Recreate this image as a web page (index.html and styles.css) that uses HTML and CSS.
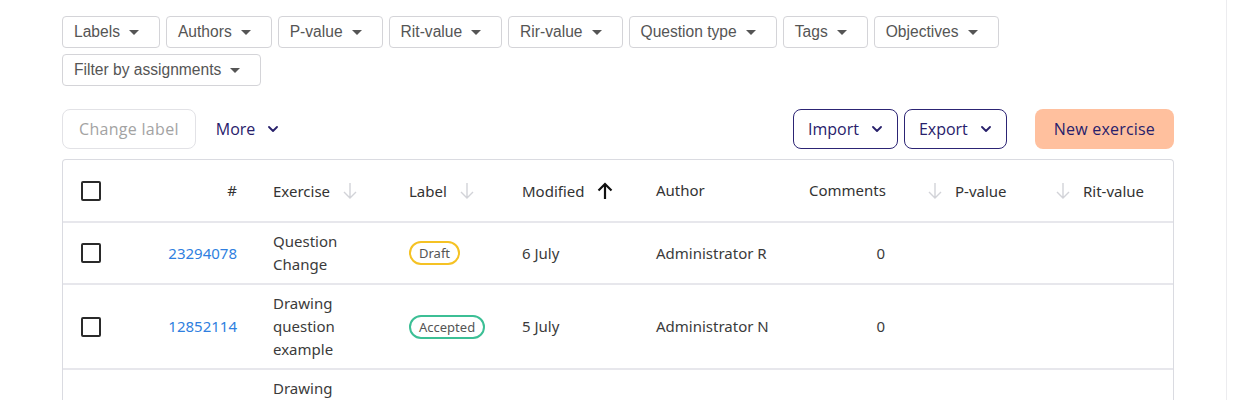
FILE: index.html
```html
<!DOCTYPE html>
<html lang="en">
<head>
    <meta charset="utf-8">
    <title>Exercises</title>
    <link rel="stylesheet" href="styles.css">
</head>
<body>
    <div class="page">
        <!-- filters -->
        <div class="filters">
            <button class="filter">Labels <span class="caret"></span></button>
            <button class="filter">Authors <span class="caret"></span></button>
            <button class="filter">P-value <span class="caret"></span></button>
            <button class="filter">Rit-value <span class="caret"></span></button>
            <button class="filter">Rir-value <span class="caret"></span></button>
            <button class="filter">Question type <span class="caret"></span></button>
            <button class="filter">Tags <span class="caret"></span></button>
            <button class="filter">Objectives <span class="caret"></span></button>
            <button class="filter">Filter by assignments <span class="caret"></span></button>
        </div>

        <!-- toolbar -->
        <div class="actions">
            <button class="btn btn-disabled">Change label</button>
            <button class="btn btn-link">More
                <svg class="chev" viewBox="0 0 10 6"><path d="M1 1l4 4 4-4"/></svg>
            </button>
            <div class="spacer"></div>
            <button class="btn btn-outline">Import
                <svg class="chev" viewBox="0 0 10 6"><path d="M1 1l4 4 4-4"/></svg>
            </button>
            <button class="btn btn-outline">Export
                <svg class="chev" viewBox="0 0 10 6"><path d="M1 1l4 4 4-4"/></svg>
            </button>
            <button class="btn btn-primary">New exercise</button>
        </div>

        <!-- exercises table -->
        <div class="table-wrap">
            <table class="exercises">
                <colgroup>
                    <col style="width:68px">
                    <col style="width:124px">
                    <col style="width:136px">
                    <col style="width:113px">
                    <col style="width:134px">
                    <col style="width:153px">
                    <col style="width:112px">
                    <col style="width:134px">
                    <col>
                </colgroup>
                <thead>
                    <tr>
                        <th><span class="check"></span></th>
                        <th class="num">#</th>
                        <th><span class="sortable">Exercise<svg class="sort" viewBox="0 0 16 18"><path d="M8 1v15M2 10l6 6 6-6"/></svg></span></th>
                        <th><span class="sortable">Label<svg class="sort" viewBox="0 0 16 18"><path d="M8 1v15M2 10l6 6 6-6"/></svg></span></th>
                        <th><span class="sortable">Modified<svg class="sort active" viewBox="0 0 16 18"><path d="M8 17V2M1.5 8.5L8 2l6.5 6.5"/></svg></span></th>
                        <th>Author</th>
                        <th class="num">Comments</th>
                        <th class="pval"><span class="sortable"><svg class="sort" viewBox="0 0 16 18"><path d="M8 1v15M2 10l6 6 6-6"/></svg>P-value</span></th>
                        <th><span class="sortable"><svg class="sort" viewBox="0 0 16 18"><path d="M8 1v15M2 10l6 6 6-6"/></svg>Rit-value</span></th>
                    </tr>
                </thead>
                <tbody>
                    <tr>
                        <td><span class="check"></span></td>
                        <td class="num"><a href="#">23294078</a></td>
                        <td>Question Change</td>
                        <td><span class="badge draft">Draft</span></td>
                        <td>6 July</td>
                        <td>Administrator R</td>
                        <td class="num">0</td>
                        <td></td>
                        <td></td>
                    </tr>
                    <tr>
                        <td><span class="check"></span></td>
                        <td class="num"><a href="#">12852114</a></td>
                        <td>Drawing question example</td>
                        <td><span class="badge accepted">Accepted</span></td>
                        <td>5 July</td>
                        <td>Administrator N</td>
                        <td class="num">0</td>
                        <td></td>
                        <td></td>
                    </tr>
                    <tr>
                        <td><span class="check"></span></td>
                        <td class="num"><a href="#">11907356</a></td>
                        <td>Drawing question with a longer example</td>
                        <td><span class="badge draft">Draft</span></td>
                        <td>4 July</td>
                        <td>Administrator N</td>
                        <td class="num">0</td>
                        <td></td>
                        <td></td>
                    </tr>
                </tbody>
            </table>
        </div>
    </div>
</body>
</html>
```

FILE: styles.css
```css
body {
    margin: 0;
    background: #fff;
    font-family: "Noto Sans", "Open Sans", sans-serif;
}

.page {
    box-sizing: border-box;
    width: 1227px;
    min-height: 400px;
    padding: 16px 52px 0 62px;
    border-right: 1px solid #ececef;
}

/* 筛选按钮 */
.filters {
    display: flex;
    flex-wrap: wrap;
    gap: 6px;
}

.filter {
    display: flex;
    align-items: center;
    height: 32px;
    padding: 0 20px 0 11px;
    border: 1px solid #d4d4d8;
    border-radius: 4px;
    background: #fff;
    color: #555;
    font-family: "Liberation Sans", Arial, sans-serif;
    font-size: 15.6px;
}

.caret {
    width: 0;
    height: 0;
    margin-left: 9px;
    border-left: 5px solid transparent;
    border-right: 5px solid transparent;
    border-top: 5px solid #555;
}

/* 工具栏 */
.actions {
    display: flex;
    align-items: center;
    gap: 6px;
    margin-top: 23px;
    margin-bottom: 10px;
}

.spacer { flex: 1; }

.btn {
    display: flex;
    align-items: center;
    height: 40px;
    padding: 0 14px;
    border: 1px solid transparent;
    border-radius: 8px;
    background: #fff;
    font-family: "Open Sans", sans-serif;
    font-size: 16px;
    font-weight: 500;
    color: #28206b;
}

.btn-disabled {
    padding: 0 16px;
    border-color: #e2e2e6;
    color: #a3a3a3;
    letter-spacing: 0.3px;
}

.btn-link {
    margin-left: 7px;
    padding: 0 6px;
}

.btn-outline {
    border-color: #2c2474;
    padding-right: 15px;
}

.btn-primary {
    margin-left: 22px;
    padding: 0 18px;
    background: #ffc09e;
    letter-spacing: 0.2px;
}

.chev {
    width: 10px;
    height: 6px;
    margin-left: 13px;
    fill: none;
    stroke: #28206b;
    stroke-width: 1.8;
    stroke-linecap: round;
    stroke-linejoin: round;
}

/* 表格 */
.table-wrap {
    border: 1px solid #dadbe1;
    border-bottom: none;
    border-radius: 4px 4px 0 0;
    overflow: hidden;
}

.exercises {
    width: 100%;
    border-collapse: collapse;
    table-layout: fixed;
    font-size: 15px;
    color: #3b3b3b;
}

.exercises th,
.exercises td {
    padding: 7px 18px;
    line-height: 23px;
    text-align: left;
    vertical-align: middle;
    border-bottom: 2px solid #e7e7ec;
}

.exercises th {
    height: 47px;
    font-weight: 400;
    color: #333;
}

.exercises .num { text-align: right; }
.exercises .pval { padding-left: 24px; }

.exercises a {
    color: #2f7fe0;
    text-decoration: none;
}

.sortable {
    display: inline-flex;
    align-items: center;
    gap: 12px;
    vertical-align: middle;
}

.sort {
    width: 16px;
    height: 18px;
    fill: none;
    stroke: #d2d3d8;
    stroke-width: 1.4;
}

.sort.active {
    stroke: #111;
    stroke-width: 2.2;
}

.check {
    display: block;
    box-sizing: border-box;
    width: 20px;
    height: 20px;
    border: 2px solid #2a2a2a;
    border-radius: 2px;
}

.badge {
    display: inline-block;
    padding: 0 8px;
    border: 2px solid;
    border-radius: 13px;
    font-size: 13px;
    line-height: 20px;
    color: #555;
}

.badge.draft { border-color: #f5c224; }
.badge.accepted { border-color: #3cbf95; }
```
